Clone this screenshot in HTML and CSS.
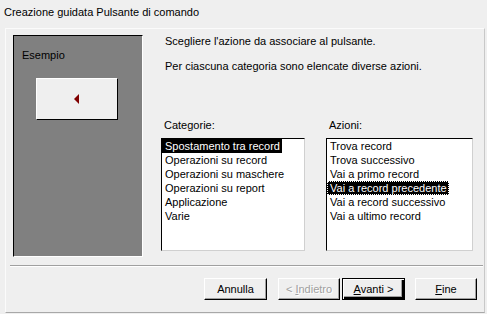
FILE: index.html
```html
<!DOCTYPE html>
<html lang="it">
<head>
    <meta charset="UTF-8">
    <title>Creazione guidata Pulsante di comando</title>
    <link rel="stylesheet" href="styles.css">
</head>
<body>
    <!-- Window caption -->
    <div class="caption">Creazione guidata Pulsante di comando</div>

    <div class="dialog">
        <div class="main">
            <!-- Sample preview -->
            <div class="preview">
                <div class="preview-label">Esempio</div>
                <div class="sample-btn">
                    <svg width="6" height="10" viewBox="0 0 6 10">
                        <polygon points="5,0 5,10 0,5" fill="#800000"/>
                    </svg>
                </div>
            </div>

            <div class="content">
                <p class="intro">Scegliere l'azione da associare al pulsante.</p>
                <p class="intro second">Per ciascuna categoria sono elencate diverse azioni.</p>

                <div class="lists">
                    <div class="col col-cat">
                        <div class="list-label">Categorie:</div>
                        <div class="listbox">
                            <div class="item"><span class="sel">Spostamento tra record</span></div>
                            <div class="item"><span>Operazioni su record</span></div>
                            <div class="item"><span>Operazioni su maschere</span></div>
                            <div class="item"><span>Operazioni su report</span></div>
                            <div class="item"><span>Applicazione</span></div>
                            <div class="item"><span>Varie</span></div>
                        </div>
                    </div>
                    <div class="col col-act">
                        <div class="list-label">Azioni:</div>
                        <div class="listbox">
                            <div class="item"><span>Trova record</span></div>
                            <div class="item"><span>Trova successivo</span></div>
                            <div class="item"><span>Vai a primo record</span></div>
                            <div class="item"><span class="sel focus">Vai a record precedente</span></div>
                            <div class="item"><span>Vai a record successivo</span></div>
                            <div class="item"><span>Vai a ultimo record</span></div>
                        </div>
                    </div>
                </div>
            </div>
        </div>

        <div class="sep"></div>

        <!-- Wizard buttons -->
        <div class="buttons">
            <div class="btn"><span>Annulla</span></div>
            <div class="btn disabled"><span>&lt; <u>I</u>ndietro</span></div>
            <div class="btn default"><span><u>A</u>vanti &gt;</span></div>
            <div class="btn last"><span><u>F</u>ine</span></div>
        </div>
    </div>
</body>
</html>
```

FILE: styles.css
```css
body {
    margin: 0;
    width: 487px;
    height: 314px;
    background-color: #efefef;
    font-family: "Liberation Sans", Arial, sans-serif;
    font-size: 11px;
    color: #000;
    overflow: hidden;
}

/* Caption line */
.caption {
    height: 28px;
    line-height: 24px;
    padding-left: 4px;
    box-sizing: border-box;
}

.dialog {
    margin-left: 5px;
    width: 480px;
    height: 285px;
    box-sizing: border-box;
    border-top: 1px solid #fbfbfb;
    border-left: 1px solid #fbfbfb;
    border-right: 1px solid #c8c8c8;
    border-bottom: 1px solid #a8a8a8;
}

.main {
    display: flex;
    height: 236px;
}

/* Grey preview panel (sunken) */
.preview {
    margin: 6px 0 0 7px;
    width: 130px;
    height: 222px;
    box-sizing: border-box;
    background-color: #808080;
    border-top: 1px solid #000;
    border-left: 1px solid #000;
    border-right: 1px solid #fff;
    border-bottom: 1px solid #fff;
    padding: 12px 0 0 8px;
}
.preview-label {
    line-height: 14px;
}
.sample-btn {
    margin: 16px 0 0 14px;
    width: 82px;
    height: 42px;
    box-sizing: border-box;
    background-color: #efefef;
    border-top: 1px solid #fff;
    border-left: 1px solid #fff;
    border-right: 1px solid #000;
    border-bottom: 1px solid #000;
    display: flex;
    align-items: center;
    justify-content: center;
}
.sample-btn svg {
    display: block;
}

.content {
    margin-left: 18px;
}
.intro {
    margin: 5px 0 0 4px;
    line-height: 14px;
}
.intro.second {
    margin-top: 11px;
}

.lists {
    display: flex;
    gap: 21px;
    margin-top: 45px;
}
.col-cat {
    width: 144px;
}
.col-act {
    width: 147px;
}
.list-label {
    line-height: 14px;
    padding-left: 3px;
}
.listbox {
    margin-top: 6px;
    height: 113px;
    box-sizing: border-box;
    background-color: #fff;
    border-top: 1px solid #000;
    border-left: 1px solid #000;
    border-right: 1px solid #d0d0d0;
    border-bottom: 1px solid #d0d0d0;
}
.item {
    height: 14px;
    line-height: 14px;
}
.item span {
    display: inline-block;
    padding: 0 2px 0 3px;
    height: 14px;
    box-sizing: border-box;
}
.item .sel {
    background-color: #000;
    color: #fff;
}
.item .focus {
    outline: 1px dotted #fff;
    outline-offset: -1px;
}

/* Etched separator */
.sep {
    margin: 0 1px 0 4px;
    height: 2px;
    box-sizing: border-box;
    border-top: 1px solid #a0a0a0;
    border-bottom: 1px solid #fff;
}

.buttons {
    display: flex;
    margin-top: 11px;
    padding-left: 198px;
}
.btn {
    width: 63px;
    height: 22px;
    box-sizing: border-box;
    background-color: #efefef;
    border-top: 1px solid #fff;
    border-left: 1px solid #fff;
    border-right: 1px solid #000;
    border-bottom: 1px solid #000;
    box-shadow: inset -1px -1px 0 #a0a0a0;
    display: flex;
    align-items: center;
    justify-content: center;
    margin-right: 11px;
    white-space: pre;
}
.btn.disabled {
    width: 62px;
    margin-right: 2px;
    color: #a0a0a0;
    text-shadow: 1px 1px 0 #fff;
}
.btn.default {
    border: 1px solid #000;
    box-shadow: inset 1px 1px 0 #fff, inset -2px -2px 0 #000, inset -3px -3px 0 #a0a0a0;
    margin-right: 10px;
}
.btn.last {
    width: 62px;
    margin-right: 0;
}
```
